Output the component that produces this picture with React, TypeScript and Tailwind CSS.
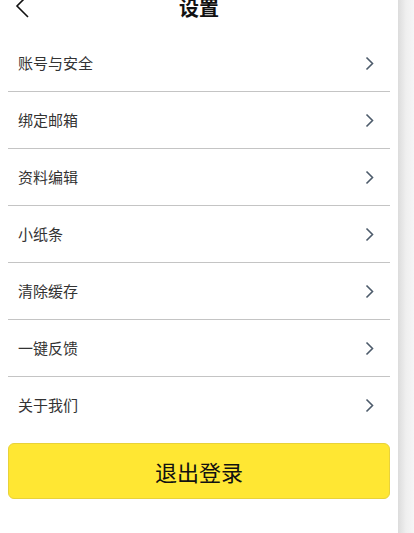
import React from 'react';

const items = ['账号与安全', '绑定邮箱', '资料编辑', '小纸条', '清除缓存', '一键反馈', '关于我们'];

const Chevron: React.FC = () => (
  <svg width="10" height="15" viewBox="0 0 10 15" className="text-[#4d5b6b]">
    <polyline points="1.5,1.5 7.5,7.5 1.5,13.5" fill="none" stroke="currentColor" strokeWidth="1.6" />
  </svg>
);

export default function App() {
  return (
    <div
      className="flex w-[414px] h-[533px] overflow-hidden bg-white"
      style={{ fontFamily: '"Noto Sans CJK SC", "Noto Sans", sans-serif' }}
    >
      <div className="w-[398px] flex flex-col">
        {/* Header */}
        <div className="relative h-[53px] -mt-[18px] flex items-center justify-center flex-shrink-0">
          <button className="absolute left-[14px] top-[12px]">
            <svg width="16" height="26" viewBox="0 0 16 26">
              <polyline points="14,1 3,12 14,23" fill="none" stroke="#111" strokeWidth="1.6" />
            </svg>
          </button>
          <h1 className="text-[20px] font-bold text-[#111] leading-none -mt-[2px]">设置</h1>
        </div>

        {/* List */}
        <div className="px-2">
          {items.map((label, i) => (
            <div
              key={label}
              className={`h-[57px] flex items-center justify-between pl-[10px] pr-[15px] ${
                i < items.length - 1 ? 'border-b border-[#c4c4c4]' : ''
              }`}
            >
              <span className="text-[15px] text-[#333]">{label}</span>
              <Chevron />
            </div>
          ))}
        </div>

        <div className="px-2 mt-[9px]">
          <button className="w-full h-[56px] rounded-[6px] bg-[#ffe733] border border-[#e8d23a] text-[22px] text-[#111] flex items-center justify-center">
            退出登录
          </button>
        </div>
      </div>
      <div className="w-[16px] h-full bg-gradient-to-r from-[#dcdcdc] via-[#efefef] to-[#f6f6f6]" />
    </div>
  );
}
